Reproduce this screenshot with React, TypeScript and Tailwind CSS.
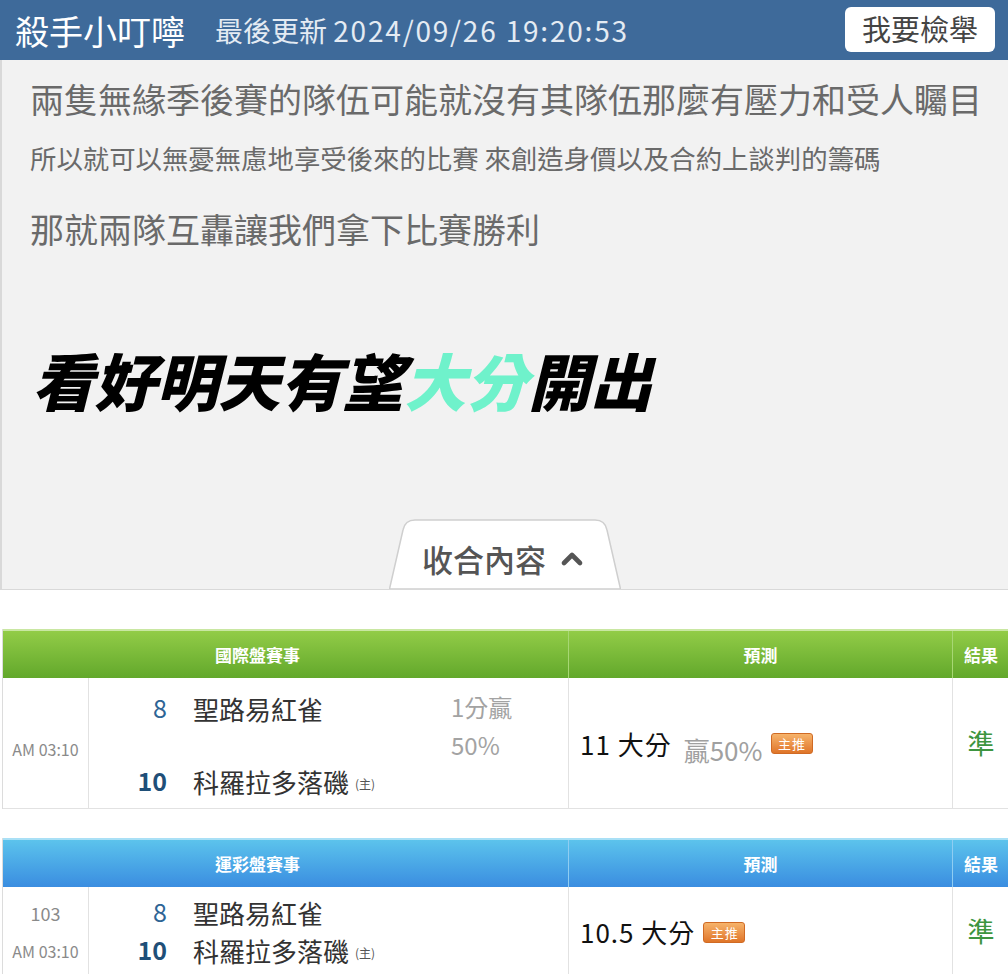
import { ChevronUp } from 'lucide-react';

const cjk = { fontFamily: '"Noto Sans CJK TC", "Noto Sans", sans-serif' };

type Team = { score: string; name: string; home?: boolean };

interface Game {
  code?: string;
  time: string;
  teams: Team[];
  odds?: string[];
  pick: string;
  winRate?: string;
  result: string;
}

function Badge() {
  return (
    <span className="inline-flex items-center justify-center w-[42px] h-[21px] rounded-[3px] border border-[#d06a24] bg-gradient-to-b from-[#f6b36a] to-[#df7528] text-white text-[13px] leading-none tracking-[1px] pl-[1px]">
      主推
    </span>
  );
}

function GameTable({ title, theme, game, tall }: { title: string; theme: 'green' | 'blue'; game: Game; tall?: boolean }) {
  const head =
    theme === 'green'
      ? 'bg-gradient-to-b from-[#92cc47] to-[#62a82b] border-t-2 border-[#c9e7a2]'
      : 'bg-gradient-to-b from-[#5cc3ec] to-[#3b8de0] border-t-2 border-[#a9e0f6]';
  const divider = theme === 'green' ? 'border-[#a7d774]' : 'border-[#8fcdf2]';

  return (
    <div className="ml-[2px] border-l border-[#dcdcdc]">
      <div className={`grid grid-cols-[566px_384px_56px] h-[49px] text-white text-[17px] font-semibold ${head}`}>
        <div className={`flex items-center justify-center pr-[56px] border-r ${divider}`}>{title}</div>
        <div className={`flex items-center justify-center border-r ${divider}`}>預測</div>
        <div className="flex items-center justify-center">結果</div>
      </div>
      <div className={`grid grid-cols-[86px_480px_384px_56px] border-b border-[#e2e2e2] ${tall ? 'h-[131px]' : 'h-[100px]'}`}>
        <div className={`flex flex-col items-center border-r border-[#e2e2e2] text-[#8a8a8a] ${tall ? 'justify-center pt-[12px]' : 'pt-[7px]'}`}>
          {game.code && <div className="h-[38px] leading-[38px] text-[18px]">{game.code}</div>}
          <div className="h-[38px] leading-[38px] text-[16px]">{game.time}</div>
        </div>
        <div className="flex border-r border-[#e2e2e2]">
          <div className={`w-[362px] flex flex-col ${tall ? 'justify-between pt-[11px] pb-[8px]' : 'pt-[6px]'}`}>
            {game.teams.map((t) => (
              <div key={t.name} className="flex items-center h-[38px]">
                <span className={`w-[78px] text-right text-[25px] ${t.home ? 'text-[#1f4f78] font-semibold' : 'text-[#2e6595]'}`}>
                  {t.score}
                </span>
                <span className="ml-[26px] text-[26px] text-[#333]">{t.name}</span>
                {t.home && <span className="ml-[6px] mt-[6px] text-[12px] text-[#555]">(主)</span>}
              </div>
            ))}
          </div>
          {game.odds && (
            <div className="pt-[10px] text-[24px] leading-[38px] text-[#a3a3a3]">
              {game.odds.map((o) => (
                <div key={o}>{o}</div>
              ))}
            </div>
          )}
        </div>
        <div className={`flex items-center pl-[11px] border-r border-[#e2e2e2] ${tall ? '' : 'pb-[10px]'}`}>
          <span className="text-[26px] tracking-[1px] text-[#111]">{game.pick}</span>
          {game.winRate && <span className="ml-[12px] mt-[12px] text-[26px] text-[#a0a0a0]">{game.winRate}</span>}
          <span className="ml-[8px] -mt-[2px]">
            <Badge />
          </span>
        </div>
        <div className={`flex items-center justify-center text-[27px] text-[#3d9540] ${tall ? '' : 'pb-[10px]'}`}>{game.result}</div>
      </div>
    </div>
  );
}

export default function App() {
  const intl: Game = {
    time: 'AM 03:10',
    teams: [
      { score: '8', name: '聖路易紅雀' },
      { score: '10', name: '科羅拉多落磯', home: true },
    ],
    odds: ['1分贏', '50%'],
    pick: '11 大分',
    winRate: '贏50%',
    result: '準',
  };
  const sport: Game = {
    code: '103',
    time: 'AM 03:10',
    teams: [
      { score: '8', name: '聖路易紅雀' },
      { score: '10', name: '科羅拉多落磯', home: true },
    ],
    pick: '10.5 大分',
    result: '準',
  };

  return (
    <div className="w-[1008px] h-[974px] overflow-hidden bg-white" style={cjk}>
      <div className="h-[60px] bg-[#3e6a9a] flex items-center pl-[15px] pr-[13px]">
        <span className="text-[34px] text-white">殺手小叮嚀</span>
        <span className="ml-[30px] text-[28px] text-[#e4ebf3]">
          最後更新 <span className="tracking-[1.8px]">2024/09/26 19:20:53</span>
        </span>
        <button className="ml-auto w-[150px] h-[45px] mt-[-2px] bg-white rounded-[6px] text-[29px] text-[#444]">我要檢舉</button>
      </div>

      <div className="bg-[#f2f2f2] border-l-2 border-b border-[#d9d9d9] pl-[28px]">
        <p className="pt-[17px] text-[34px] leading-[44px] text-[#6a6a6a]">兩隻無緣季後賽的隊伍可能就沒有其隊伍那麼有壓力和受人矚目</p>
        <p className="mt-[20px] text-[26.4px] leading-[34px] text-[#6a6a6a]">所以就可以無憂無慮地享受後來的比賽 來創造身價以及合約上談判的籌碼</p>
        <p className="mt-[32px] text-[34px] leading-[44px] text-[#6a6a6a]">那就兩隊互轟讓我們拿下比賽勝利</p>
        <p className="mt-[90px] pl-[2px] text-[62px] leading-[76px] font-black italic text-black">
          看好明天有望<span className="text-[#6ff2cb]">大分</span>開出
        </p>
        <div className="flex justify-center mt-[102px] -ml-[28px]">
          <div className="relative w-[232px] h-[70px] flex items-center justify-center gap-[10px] pt-[10px]">
            <svg className="absolute inset-0" width="232" height="70" viewBox="0 0 232 70">
              <path d="M0.5 70 L14 11 Q16 1 26 1 L206 1 Q216 1 218 11 L231.5 70 Z" fill="#fff" stroke="#cfcfcf" strokeWidth="1.5" />
            </svg>
            <span className="relative text-[31px] font-medium text-[#555]">收合內容</span>
            <ChevronUp className="relative text-[#555]" size={32} strokeWidth={3.5} />
          </div>
        </div>
      </div>

      <div className="mt-[39px]">
        <GameTable title="國際盤賽事" theme="green" game={intl} tall />
      </div>
      <div className="mt-[29px]">
        <GameTable title="運彩盤賽事" theme="blue" game={sport} />
      </div>
    </div>
  );
}
